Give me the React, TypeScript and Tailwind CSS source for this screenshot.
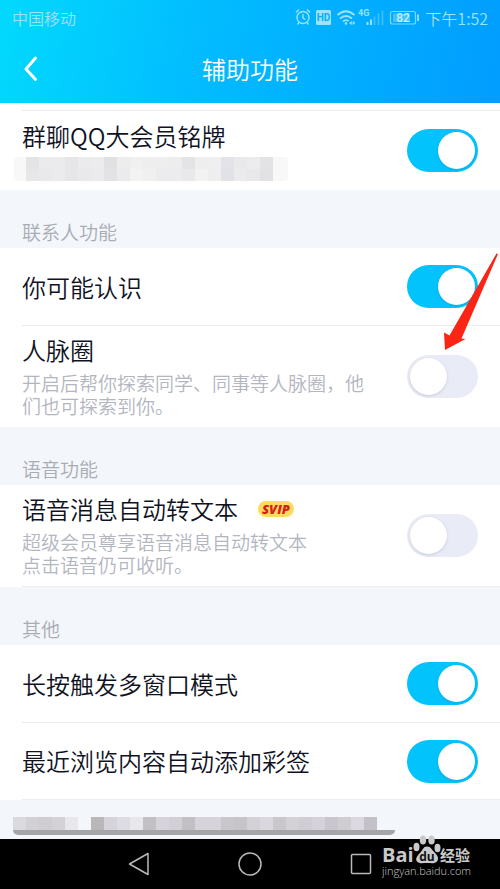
import React, { useState } from "react";

interface SettingRowProps {
  id: string;
  title: string;
  badge?: string;
  lines?: string[];
  defaultOn?: boolean;
  className: string;
  children?: React.ReactNode;
}

const Toggle = ({ id, defaultOn }: { id: string; defaultOn?: boolean }) => {
  const [on, setOn] = useState(!!defaultOn);

  return (
    <span className="relative block h-[43px] w-[71px] shrink-0">
      <input
        id={id}
        type="checkbox"
        role="switch"
        checked={on}
        onChange={(e) => setOn(e.target.checked)}
        className="peer block h-full w-full cursor-pointer appearance-none rounded-full bg-[#e9ebf6] checked:bg-[#03c3fd]"
      />
      <span className="pointer-events-none absolute top-[3px] left-[3px] size-[37px] rounded-full bg-white shadow-[0_1px_3px_rgba(60,70,120,0.2)] peer-checked:right-[3px] peer-checked:left-auto" />
    </span>
  );
};

const SettingRow = ({
  id,
  title,
  badge,
  lines,
  defaultOn,
  className,
  children,
}: SettingRowProps) => (
  <div className={"flex items-center justify-between bg-white px-[22px] " + className}>
    <div>
      <div className="flex items-center">
        <label htmlFor={id} className="text-2xl leading-[30px] text-[#10131f]">
          {title}
        </label>
        {badge && (
          <span className="ml-5 rounded-full bg-[#fedb5e] px-1 font-['Open_Sans'] text-[13px] leading-4 font-extrabold text-[#d3221c] italic">
            {badge}
          </span>
        )}
      </div>
      {lines && (
        <p className="mt-[6px] pb-[2px] text-[19px] leading-[23px] text-[#b3b6bf]">
          {lines.map((line) => (
            <span key={line} className="block whitespace-nowrap">
              {line}
            </span>
          ))}
        </p>
      )}
      {children}
    </div>
    <Toggle id={id} defaultOn={defaultOn} />
  </div>
);

const SectionTitle = ({ children }: { children: React.ReactNode }) => (
  <h2 className="flex h-[58px] items-end px-[22px] pb-[5px] text-[19px] leading-[23px] text-[#a9acb4]">
    {children}
  </h2>
);

const Divider = () => (
  <div className="bg-white pl-[22px]">
    <div className="h-px bg-[#ebecee]" />
  </div>
);

const topMosaic = [
  ["#e4e4e7", "#ebebed", "#ebebed", "#e6e6e9", "#ebebed", "#ececee", "#e1e1e4", "#ededee", "#f0f0f1", "#eeeeef", "#eeeeef", "#ededee", "#e4e4e7", "#eeeeef", "#efeff0", "#e3e3e9", "#e9e9eb", "#ececee", "#e3e3e6"],
  ["#e7e7ea", "#e9e9eb", "#ebebed", "#e6e6e9", "#e9e9eb", "#ebebed", "#e3e3e6", "#ebebed", "#f3f3f4", "#f0f0f1", "#ececee", "#ececee", "#e9e9eb", "#f2f2f3", "#eeeeef", "#e1e1e8", "#ebebed", "#e8e8ea", "#e2e2e5"],
];

const bottomMosaic = [
  "#dad9de", "#d2d0d5", "#cfcdd2", "#d3d1d6", "#e7e7ec", "#f3f6fa", "#b9b7ba", "#d6d4da",
  "#dddce2", "#e7e7ec", "#c2c0c5", "#d6d4da", "#d2d0d6", "#c2c0c5", "#d6d4da", "#d6d4da",
  "#c9c7cb", "#c6c4c8", "#d3d1d6", "#dad8de", "#c9c7cc", "#d3d1d6", "#d0ced4", "#d5d3d9",
  "#c9c7cd", "#cfcdd2", "#dbd9df", "#c3c1c7",
];

const StatusIcons = () => (
  <svg viewBox="0 0 126 20" className="h-5 w-[126px]" fill="none" stroke="#9be3fb" strokeWidth="1.4" role="img" aria-label="status">
    {/* alarm */}
    <circle cx="8" cy="9.5" r="6" />
    <path d="M8 6v4l2.5 1.500M1 4.500l3-3M15 4.500l-3-3M4 14.500l-1.500 2M12 14.500l1.500 2" />
    {/* hd */}
    <rect x="21" y="2" width="15" height="15" rx="1.5" fill="#9be3fb" stroke="none" />
    <text x="28.5" y="13" textAnchor="middle" className="font-[Roboto] text-[10px] font-bold" fill="#08adfb" stroke="none">HD</text>
    {/* wifi */}
    <path d="M42.500 7q8.500-7.500 17 0M45 10.500q6-5 12 0M48 13.500q3-2.500 5.500-.5" strokeWidth="1.7" />
    <circle cx="51" cy="15.500" r="1.300" fill="#9be3fb" stroke="none" />
    <path d="M56.500 13.500l-2 1.500 2 1.500zM58 13.500l2 1.500-2 1.500z" fill="#9be3fb" strokeWidth=".6" />
    {/* signal */}
    <text x="63" y="8" className="font-[Roboto] text-[9px] font-bold" fill="#9be3fb" stroke="none">4G</text>
    <path d="M72.500 14v3M76 11.500v5.500" strokeWidth="2" />
    <path d="M79.500 8.500v8.500M83.500 5.500v11.500M87.500 2.500v14.500" strokeWidth="1.6" opacity=".4" />
    {/* battery */}
    <rect x="95.500" y="3.500" width="25" height="12.500" rx="2" strokeWidth="1.2" opacity=".8" />
    <rect x="98" y="5.500" width="17" height="8.500" fill="#6fd0fb" stroke="none" opacity=".6" />
    <path d="M123 6.500v6.500" strokeWidth="1.8" />
    <text x="108" y="14" textAnchor="middle" className="font-[Roboto] text-[12px] font-medium" fill="#c4effc" stroke="none">82</text>
  </svg>
);

const Watermark = () => (
  <svg viewBox="0 0 96 46" className="absolute right-[22px] bottom-[9px] h-[46px] w-24" fill="#c9c9c9" role="img" aria-label="Baidu">
    <text x="0" y="28" className="font-['Open_Sans'] text-[20px] font-bold">Bai</text>
    <ellipse cx="34.500" cy="13" rx="3" ry="4.2" />
    <ellipse cx="41" cy="6" rx="3.2" ry="4.6" />
    <ellipse cx="49.500" cy="6" rx="3.2" ry="4.6" />
    <ellipse cx="55.500" cy="14" rx="3" ry="4.2" />
    <path d="M45 12.500c4 0 5 3.500 8 6.500s4 6 2 8.500-6 1.500-10 1.500-8 1-10-1.500 0-5.500 3-8.500 3-6.500 7-6.500z" />
    <text x="45" y="27" textAnchor="middle" className="font-['Open_Sans'] text-[12px] font-bold" fill="#111">du</text>
    <text x="58" y="27" className="font-['Noto_Sans_CJK_SC'] text-[15px] font-bold">经验</text>
    <text x="0" y="41" className="font-['Open_Sans'] text-[11px]">jingyan.baidu.com</text>
  </svg>
);

export default function App() {
  return (
    <main className="relative bg-[#f3f6fa] font-['Noto_Sans_CJK_SC',sans-serif] font-[350]">
      <header className="h-[103px] bg-linear-[100deg] from-[#02d9fd] via-[#02bcff] via-40% to-[#019dff]">
        <div className="flex h-[35px] items-center justify-between px-3 text-base text-[#9be3fb]">
          <span>中国移动</span>
          <span className="flex items-center gap-1">
            <StatusIcons />
            <span>下午1:52</span>
          </span>
        </div>
        <div className="grid h-[68px] grid-cols-[56px_1fr_56px] items-center text-white">
          <button type="button" aria-label="返回" className="flex h-full items-center pl-[22px]">
            <svg viewBox="0 0 18 28" className="h-7 w-[18px]" fill="none" stroke="currentColor" strokeWidth="3" strokeLinecap="round" strokeLinejoin="round">
              <path d="M13.500 3L4 14l9.500 10.500" />
            </svg>
          </button>
          <h1 className="text-center text-2xl leading-8">辅助功能</h1>
        </div>
      </header>

      <div className="h-[7px] bg-white" />
      <Divider />
      <SettingRow id="nameplate" title="群聊QQ大会员铭牌" defaultOn className="h-[79px]">
        <div className="mt-[6px] -ml-2 w-[274px] rounded bg-[#f8f8f9] pl-3">
          {topMosaic.map((row, i) => (
            <div key={i} className="flex">
              {row.map((color, j) => (
                <span key={j} className="h-3 w-[13px]" style={{ backgroundColor: color }} />
              ))}
            </div>
          ))}
        </div>
      </SettingRow>

      <SectionTitle>联系人功能</SectionTitle>
      <div className="relative">
        <SettingRow id="maybe-know" title="你可能认识" defaultOn className="h-[77px]" />
        <Divider />
        <SettingRow
          id="circle"
          title="人脉圈"
          lines={["开启后帮你探索同学、同事等人脉圈，他", "们也可探索到你。"]}
          className="h-[101px]"
        />
        {/* pointer arrow */}
        <svg viewBox="0 0 56 100" className="pointer-events-none absolute top-[5px] right-0 h-[100px] w-14" fill="#fb2516">
          <path d="M52.500.5l1.500.5-36.500 84.500 4 .5L1 97 0 79.500l5.500 3z" />
        </svg>
      </div>

      <SectionTitle>语音功能</SectionTitle>
      <SettingRow
        id="voice-text"
        title="语音消息自动转文本"
        badge="SVIP"
        lines={["超级会员尊享语音消息自动转文本", "点击语音仍可收听。"]}
        className="h-[101px]"
      />
      <Divider />

      <SectionTitle>其他</SectionTitle>
      <SettingRow id="multi-window" title="长按触发多窗口模式" defaultOn className="h-[77px]" />
      <Divider />
      <SettingRow id="auto-tag" title="最近浏览内容自动添加彩签" defaultOn className="h-[76px]" />
      <Divider />

      <div className="h-[39px] px-[13px] pt-[17px]">
        <div className="flex">
          {bottomMosaic.map((color, i) => (
            <span key={i} className="h-[13px] w-[13px]" style={{ backgroundColor: color }} />
          ))}
        </div>
        <div className="h-[5px] w-[382px] rounded-b-lg bg-[#a5a5a8]" />
      </div>

      <nav className="flex h-[50px] items-center justify-center gap-[87px] bg-black text-[#b9b9b9]">
        <button type="button" aria-label="返回">
          <svg viewBox="0 0 24 24" className="size-6" fill="none" stroke="currentColor" strokeWidth="1.5" strokeLinejoin="round">
            <path d="M21 1.500v21L2.500 12z" />
          </svg>
        </button>
        <button type="button" aria-label="主页">
          <svg viewBox="0 0 24 24" className="size-6" fill="none" stroke="currentColor" strokeWidth="1.5">
            <circle cx="12" cy="12" r="11" />
          </svg>
        </button>
        <button type="button" aria-label="最近">
          <svg viewBox="0 0 24 24" className="size-6" fill="none" stroke="currentColor" strokeWidth="1.5">
            <rect x="2.500" y="2.500" width="19" height="19" rx="1" />
          </svg>
        </button>
      </nav>
      <Watermark />
    </main>
  );
}
